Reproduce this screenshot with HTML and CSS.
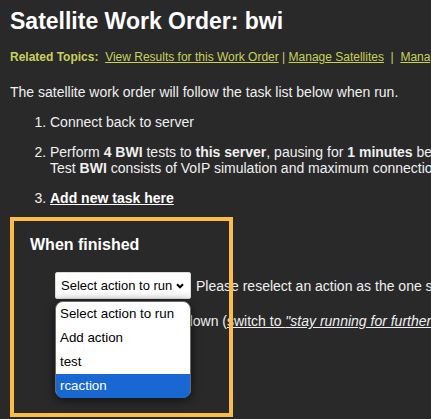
FILE: index.html
```html
<!DOCTYPE html>
<html lang="en">
<head>
<meta charset="utf-8">
<title>Satellite Work Order: bwi</title>
<link rel="stylesheet" href="styles.css">
</head>
<body>
<h1 class="title">Satellite Work Order: bwi</h1>
<p class="related"><b>Related Topics:</b>&nbsp; <a href="#">View Results for this Work Order</a> | <a href="#">Manage Satellites</a>&nbsp; |&nbsp; <a href="#">Manage Work Orders</a></p>
<p class="intro">The satellite work order will follow the task list below when run.</p>
<ol class="tasks">
  <li>Connect back to server</li>
  <li>Perform <b>4 BWI</b> tests to <b>this server</b>, pausing for <b>1 minutes</b> between tests.<br>Test <b>BWI</b> consists of VoIP simulation and maximum connection speed tests.</li>
  <li><a class="add" href="#">Add new task here</a></li>
</ol>
<section class="finish">
  <h3 class="finish-title">When finished</h3>
  <div class="action-row">
    <div class="select-wrap">
      <div class="select">
        <span class="select-label">Select action to run</span>
        <svg class="chevron" width="8" height="6" viewBox="0 0 8 6"><path d="M1 1.2 L4 4.3 L7 1.2" fill="none" stroke="#000" stroke-width="2"/></svg>
      </div>
      <div class="options">
        <div class="option">Select action to run</div>
        <div class="option">Add action</div>
        <div class="option">test</div>
        <div class="option active">rcaction</div>
      </div>
    </div>
    <span class="note">Please reselect an action as the one selected before no longer exists.</span>
  </div>
  <p class="shutdown">Finish and then shut down (<a href="#">switch to <i>"stay running for further tasks"</i></a>)</p>
</section>
<div class="highlight"></div>
</body>
</html>
```
FILE: styles.css
```css
html {
  overflow: hidden;
}
body {
  margin: 0;
  padding: 0 10px;
  background: #292929;
  color: #f0f0f0;
  font-family: "Liberation Sans", Arial, sans-serif;
  font-size: 14px;
  line-height: 16px;
  white-space: nowrap;
  min-height: 419px;
}
.title {
  margin: 8px 0 0;
  font-size: 23px;
  line-height: 27px;
  font-weight: bold;
  color: #ffffff;
}
.related {
  margin: 15px 0 0;
  font-size: 12px;
  line-height: 15px;
  color: #c8d25a;
}
.related a {
  color: #c8d25a;
  text-decoration: underline;
}
.intro {
  margin: 19px 0 0;
}
.tasks {
  margin: 14px 0 0;
  padding-left: 40px;
}
.tasks li {
  margin-bottom: 14px;
}
.tasks li:last-child {
  margin-bottom: 0;
}
.add {
  color: #ffffff;
  font-weight: bold;
  text-decoration: underline;
}
.finish {
  margin-top: 30px;
  padding-left: 20px;
}
.finish-title {
  margin: 0;
  font-size: 16px;
  line-height: 18px;
  font-weight: bold;
  color: #ffffff;
}
.action-row {
  display: flex;
  align-items: center;
  margin-top: 18px;
  padding-left: 25px;
}
.select-wrap {
  position: relative;
  flex: none;
}
.select {
  box-sizing: border-box;
  width: 136px;
  height: 27px;
  display: flex;
  align-items: center;
  justify-content: space-between;
  padding: 0 6px 0 5px;
  background: linear-gradient(#ffffff 70%, #f0f0f0);
  border: 1px solid #dcdcdc;
  border-radius: 2px;
  color: #000;
  font-size: 13px;
  line-height: 16px;
}
.chevron {
  display: block;
  flex: none;
}
.options {
  position: absolute;
  top: 29px;
  left: 0;
  z-index: 2;
  box-sizing: border-box;
  width: 136px;
  height: 97px;
  background: #ffffff;
  border: 1px solid #6b6b6b;
  border-radius: 8px;
  box-shadow: 0 2px 10px rgba(0, 0, 0, 0.6);
  color: #000;
  font-size: 13.333px;
}
.option {
  height: 24px;
  line-height: 24px;
  padding-left: 4px;
}
.option.active {
  background: #1967d2;
  color: #ffffff;
  border-radius: 0 0 7px 7px;
}
.note {
  margin-left: 5px;
}
.shutdown {
  margin: 14px 0 0;
  padding-left: 25px;
}
.shutdown a {
  color: #f0f0f0;
  text-decoration: underline;
}
.highlight {
  position: absolute;
  left: 10px;
  top: 217px;
  width: 223px;
  height: 200px;
  box-sizing: border-box;
  border: 4px solid #fbbc48;
  z-index: 3;
  pointer-events: none;
}
```
